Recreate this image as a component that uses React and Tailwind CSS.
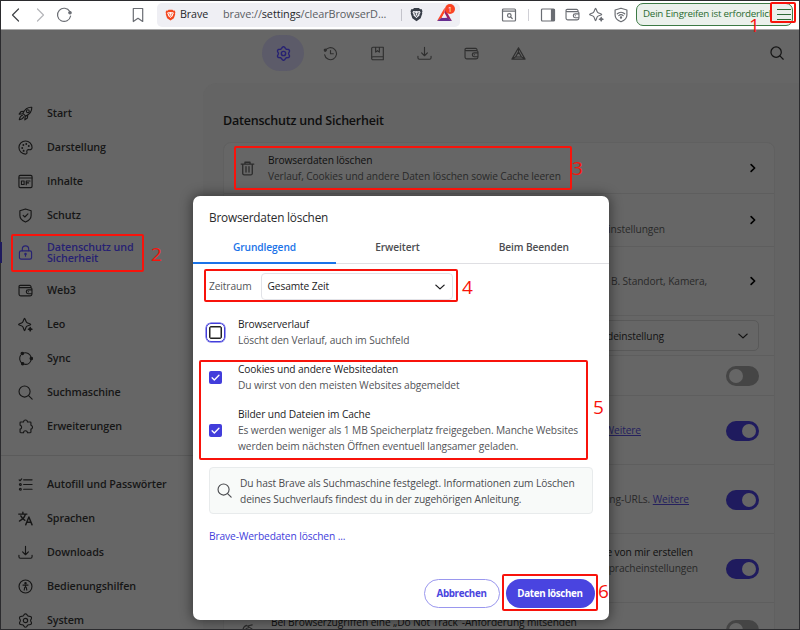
import React from "react";

const stroke = { fill: "none", stroke: "currentColor", strokeWidth: 1.2, strokeLinecap: "round", strokeLinejoin: "round" };

function Svg({ className = "size-4", children, box = 16, sw }) {
  return (
    <svg viewBox={`0 0 ${box} ${box}`} className={`shrink-0 ${className}`} {...stroke} strokeWidth={sw ?? 1.2}>
      {children}
    </svg>
  );
}

// Six-lobed outline of the settings gear.
const gearPoints = Array.from({ length: 72 }, (_, i) => {
  const a = (i * 5 * Math.PI) / 180;
  const r = 6.3 + 0.85 * Math.cos(6 * (a - Math.PI / 2));
  return `${(8 + r * Math.cos(a)).toFixed(2)},${(8 + r * Math.sin(a)).toFixed(2)}`;
}).join(" ");

const Gear = (p) => (
  <Svg {...p}>
    <polygon points={gearPoints} />
    <circle cx="8" cy="8" r="2.300" />
  </Svg>
);
const History = (p) => (
  <Svg {...p}>
    <path d="M2.200 5.500A6.400 6.400 0 1 1 1.700 9.300M8 4.800V8.300h3" />
    <circle cx="2.400" cy="4.300" r="1.100" fill="currentColor" />
  </Svg>
);
const Book = (p) => (
  <Svg {...p}>
    <path d="M1.800 13V2.500a1.200 1.200 0 0 1 1.200-1.200h11.200v13.400H3.300a1.500 1.500 0 0 1 0-3.200h10.900M6 1.500v5l2-1.500 2 1.500v-5" />
  </Svg>
);
const Download = (p) => (
  <Svg {...p}>
    <path d="M8 1.500v8.700M4.900 7.300 8 10.400l3.100-3.100M1 11v1.600a1.500 1.500 0 0 0 1.500 1.500h11a1.500 1.500 0 0 0 1.500-1.500V11" />
  </Svg>
);
const Wallet = (p) => (
  <Svg {...p}>
    <path d="M13.900 4.900v-.8a1.600 1.600 0 0 0-1.600-1.600H2.400A1.300 1.300 0 0 0 1.100 3.800v7.900a2 2 0 0 0 2 2h9.900a1.900 1.900 0 0 0 1.900-1.900V6.500a1.600 1.600 0 0 0-1.600-1.600H2.400a1.200 1.200 0 0 1-1.200-1.200M14.900 7.300h-4a2 2 0 0 0 0 4.100h4M10.900 9.300h.3" />
  </Svg>
);
const Triangles = (p) => (
  <Svg {...p}>
    <path d="M8 1.800 15 14H1ZM8 6.300 11.200 11.700H4.800ZM8 1.800v4.500M15 14l-3.800-2.300M1 14l3.800-2.300" />
  </Svg>
);
const Search = (p) => (
  <Svg {...p}>
    <circle cx="7" cy="7" r="5.900" />
    <path d="m11.300 11.300 3.800 3.800" />
  </Svg>
);
const Sparkle = (p) => (
  <Svg {...p}>
    <path d="M7 1.300c.7 0 1 3.200 2.200 4.400 1.200 1.200 4.400 1.500 4.400 2.200s-3.200.9-4.400 2.100C8 11.200 7.700 14.500 7 14.500s-1-3.300-2.200-4.500C3.600 8.800.6 8.600.6 7.900s3-1 4.200-2.200C6 4.500 6.300 1.300 7 1.300Z" />
    <path d="m13 10.900.6 1.500 1.500.6-1.500.6-.6 1.500-.6-1.500-1.500-.6 1.500-.6Z" fill="currentColor" />
  </Svg>
);
const Rocket = (p) => (
  <Svg {...p}>
    <path d="M14.700 1.300c-4.200-.3-7.200 1.700-9.500 6.500l3 3c4.800-2.300 6.700-5.300 6.500-9.500ZM6.300 5.600 3.200 6 1.200 8.700l4-.4M10.400 9.700 10 12.800l-2.700 2 .4-4M4.700 10c-1.900.3-2.600 1.600-3.300 4.600 3-.6 4.200-1.200 4.700-3" />
    <circle cx="10.500" cy="5.500" r="1.500" />
  </Svg>
);
const Palette = (p) => (
  <Svg {...p}>
    <path d="M15 8a7 7 0 1 0-7 7c1.300 0 1.800-.9 1.500-1.900-.5-1.800.5-3 2.200-2.800 2.100.3 3.300-.7 3.300-2.300Z" />
    <path d="M4.500 8.500v.1M5.700 5.300v.1M8.800 4.200v.1M11.500 6.300v.1M6 11.500v.1" strokeWidth="2" />
  </Svg>
);
const Content = (p) => (
  <Svg {...p}>
    <rect x="1" y="1.500" width="14" height="13" rx="1.400" />
    <path d="M1.200 4.300h13.600M8.800 7.500h4M8.800 9.500h2.500M8.800 7.500v4" />
    <rect x="3.700" y="7.500" width="2.800" height="3.700" />
  </Svg>
);
const Shield = (p) => (
  <Svg {...p}>
    <path d="M8 1 14 2.900v5.200c0 3.300-2.300 5.500-6 6.900-3.700-1.400-6-3.600-6-6.900V2.900Z" />
    <path d="m5.500 7.800 1.800 1.800 3.300-3.400" />
  </Svg>
);
const Lock = (p) => (
  <Svg {...p}>
    <rect x="1.500" y="6.200" width="13" height="8.800" rx="1.800" />
    <path d="M4.600 6V4.300a3.400 3.400 0 0 1 6.800 0V6M8 9.500v2.400" />
    <circle cx="8" cy="9.600" r=".7" fill="currentColor" />
  </Svg>
);
const Sync = (p) => (
  <Svg {...p}>
    <path d="M4.300 13A6.300 6.300 0 0 1 2.800 4.500M6 2.200a6.200 6.200 0 0 1 7.900 4.300M13.900 9.700A6.200 6.200 0 0 1 7 14.200" />
    <g fill="currentColor">
      <circle cx="4.600" cy="2.600" r="1.300" />
      <circle cx="14.200" cy="8" r="1.300" />
      <circle cx="5" cy="13.500" r="1.300" />
    </g>
  </Svg>
);
const Puzzle = (p) => (
  <Svg {...p}>
    <path d="M3 3.200h2.900a2.100 2.100 0 0 1 4.200 0H13a.8.8 0 0 1 .8.800v2.700a2.100 2.100 0 0 1 0 4.100v3a.8.8 0 0 1-.8.800h-2.900a2.100 2.100 0 0 0-4.200 0H3a.8.8 0 0 1-.8-.8v-3a2.100 2.100 0 0 0 0-4.100V4a.8.8 0 0 1 .8-.8Z" />
  </Svg>
);
const List = (p) => (
  <Svg {...p}>
    <path d="M6 3h9M6 8h9M6 13h9M1.200 3l1 1L4 2" />
    <circle cx="2.500" cy="8" r="1" />
    <circle cx="2.500" cy="13" r="1" />
  </Svg>
);
const Translate = (p) => (
  <Svg sw={1.500} {...p}>
    <path d="M.8 3.300h8.700M5.200 1.300v2M7.900 3.500C7 6.600 4.900 9 1.500 10.700M3 5.200c1 2 2.500 3.700 4.400 4.700M8.200 14.800l3.400-8.500L15 14.800M9.300 12h4.600" />
  </Svg>
);
const Access = (p) => (
  <Svg {...p}>
    <circle cx="8" cy="8" r="6.900" />
    <circle cx="8" cy="4.500" r=".7" fill="currentColor" />
    <path d="M5.300 6.500h5.400M8 6.500v2.300M6.600 11.800 7.200 8.800h1.600l.6 3" />
  </Svg>
);
const Trash = (p) => (
  <Svg sw={1.400} {...p}>
    <path d="M1.300 3.300h13.400M5.300 3.100V1.300h5.400v1.800M2.900 3.500v9.700a1.500 1.500 0 0 0 1.500 1.500h7.200a1.500 1.500 0 0 0 1.500-1.500V3.500M6.400 6v5.800M9.600 6v5.800" />
  </Svg>
);
const ChevronRight = ({ className }) => (
  <Svg className={className} sw={2.200}>
    <path d="m5.500 3.500 4.700 4.500-4.700 4.500" />
  </Svg>
);
const ChevronDown = ({ className }) => (
  <Svg className={className} sw={1.800}>
    <path d="m2.500 5.500 5.500 5 5.500-5" />
  </Svg>
);
const Lion = ({ className, fill, face }) => (
  <svg viewBox="0 0 16 18" className={`shrink-0 ${className}`}>
    <path d="M5 1h6l1.500 1.500 1.700-.2L15.400 5l-.6 1.500.3 1.200-2 6L8 17.400 2.900 13.700l-2-6 .3-1.200L.6 5l1.200-2.700 1.700.2Z" fill={fill} />
    <path d="M4 4.700 6.500 5 8 4.600 9.500 5l2.500-.3 1 1.800-1.600 3 .3 1-2 1.200L8 13.500l-1.700-1.800-2-1.200.3-1L3 6.500Z" fill={face} />
    <path d="M4.600 6.800 7 7.500l-.6 2L8 10.600l1.600-1.100-.6-2 2.400-.7M8 10.800v1" fill="none" stroke={fill} strokeWidth="1" />
  </svg>
);

const navTop = [
  ["Start", Rocket],
  ["Darstellung", Palette],
  ["Inhalte", Content],
  ["Schutz", Shield],
  ["Datenschutz und Sicherheit", Lock, true],
  ["Web3", Wallet],
  ["Leo", Sparkle],
  ["Sync", Sync],
  ["Suchmaschine", Search],
  ["Erweiterungen", Puzzle],
];
const navBottom = [
  ["Autofill und Passwörter", List],
  ["Sprachen", Translate],
  ["Downloads", Download],
  ["Bedienungshilfen", Access],
  ["System", Gear],
];

function NavItem({ label, Icon, active }) {
  return (
    <div className={`flex shrink-0 items-center gap-[14px] pl-[18px] ${active ? "h-[41px] text-[#262173]" : "h-[34px] text-[#161616]"}`}>
      <Icon className="size-[15px]" />
      <span className="w-[130px] pt-px text-[10.750px] leading-[11px] font-semibold tracking-[-0.1px]">
        {active ? <>Datenschutz und<br />Sicherheit</> : label}
      </span>
    </div>
  );
}

function Toggle({ on }) {
  return (
    <div className={`flex h-5 w-[33px] shrink-0 items-center rounded-full px-[3px] ${on ? "justify-end bg-[#1f1b5e]" : "bg-[#454545]"}`}>
      <div className="size-[14px] rounded-full bg-[#666]" />
    </div>
  );
}

function Row({ className, children }) {
  return <div className={`flex shrink-0 items-center border-b border-[#5e5e5e] pr-[15px] ${className}`}>{children}</div>;
}

function Checkbox({ checked }) {
  return checked ? (
    <div className="flex size-[13px] items-center justify-center rounded-[2px] bg-[#423ddb] text-white">
      <Svg className="size-[11px]" sw={2}><path d="m3 8.500 3.300 3L13 4.700" /></Svg>
    </div>
  ) : (
    <div className="flex size-[19px] items-center justify-center rounded-[5px] border-[1.500px] border-[#423ddb] shadow-[0_0_0_0.5px_#423ddb]">
      <div className="size-[13px] rounded-[2px] border-[1.500px] border-[#222] shadow-[inset_0_0_0_0.5px_#222]" />
    </div>
  );
}

function Option({ title, checked, children, className }) {
  return (
    <div className={`flex items-center ${className}`}>
      <div className="flex w-[45px] shrink-0 justify-center"><Checkbox checked={checked} /></div>
      <div className="whitespace-nowrap text-[10.200px] leading-4 tracking-[-0.1px]">
        <div className="text-[#1c1c1e]">{title}</div>
        <div className="text-[#535458]">{children}</div>
      </div>
    </div>
  );
}

function Mark({ box, num, label }) {
  return (
    <>
      <div className={`absolute rounded-[2px] border-2 border-[#f8130b] ${box}`} />
      <div className={`absolute text-[19px] leading-5 text-[#f8130b] ${num}`}>{label}</div>
    </>
  );
}

export default function App() {
  return (
    <div className="relative flex h-[630px] w-[800px] flex-col overflow-hidden bg-[#666] font-['Open_Sans','Noto_Sans',sans-serif] text-[10.200px] tracking-[-0.1px] text-[#1a1a1a]">
      <header className="flex h-[30px] shrink-0 items-center border-b border-[#aaa] bg-white text-[#6a6d73]">
        <div className="flex w-[157px] items-center pl-2">
          <Svg className="size-4 text-[#3f4246]"><path d="M10.500 2 4.500 8l6 6" /></Svg>
          <Svg className="ml-2 size-4 text-[#b5b6ba]"><path d="m5.500 2 6 6-6 6" /></Svg>
          <Svg className="ml-2 size-4"><path d="M13.800 4.500A6.600 6.600 0 1 0 14.600 9" /><circle cx="14" cy="5.800" r="1.200" fill="currentColor" /></Svg>
          <Svg className="ml-[58px] size-4"><path d="M3.300 1.500h9.400v13L8 11.300l-4.700 3.200Z" /></Svg>
        </div>
        <div className="flex h-[24px] w-[303px] items-center rounded-[5px] bg-[#efeff4]">
          <Lion className="ml-[8px] h-[12px] w-[11px]" fill="#f4471f" face="#fff" />
          <span className="ml-[4px] w-[43px] text-[10.700px] text-[#26272b]">Brave</span>
          <span className="w-[178px] text-[10.900px] text-[#5a5d63]">brave://<span className="text-[#26272b]">settings</span>/clearBrowserD...</span>
          <span className="h-3 w-px bg-[#c3c3cb]" />
          <Lion className="ml-[8px] h-[15px] w-[13px]" fill="#383e48" face="#efeff4" />
          <div className="relative ml-[14px]">
            <svg viewBox="0 0 16 14" className="h-[13px] w-[15px]">
              <path d="M8 0 16 14 8 9.500Z" fill="#9e1f63" />
              <path d="M8 0 0 14 5 10.800 8 5Z" fill="#ff4724" />
              <path d="M0 14h16l-5-3.500H5Z" fill="#662d91" />
              <path d="M8 5.200 11 10.500H5Z" fill="#efeff4" />
            </svg>
            <span className="absolute -top-[4px] left-[8px] flex size-[10px] items-center justify-center rounded-full bg-[#fb4324] text-[7px] leading-none text-white">1</span>
          </div>
        </div>
        <Svg className="ml-[41px] size-4"><rect x="1.500" y="2" width="13" height="12" rx="1" /><path d="M1.500 4.200h13M9.700 10l1.500 1.500" /><circle cx="8.300" cy="8.500" r="1.800" /></Svg>
        <span className="ml-[11px] h-3 w-px bg-[#d0d0d6]" />
        <Svg className="ml-[11px] size-4"><rect x="1.500" y="2" width="13" height="12" rx="1" /><path d="M11.500 2.500h2.700v11h-2.700Z" fill="currentColor" /></Svg>
        <Wallet className="ml-[9px] size-[15px]" />
        <Sparkle className="ml-[9px] size-[15px]" />
        <Svg className="ml-[9px] size-4"><path d="M8 1.200 13.900 3v5c0 3.200-2.200 5.400-5.900 6.800C4.300 13.400 2.100 11.200 2.100 8V3ZM4.300 6.800a5.500 5.500 0 0 1 7.400 0M5.800 8.600a3.200 3.200 0 0 1 4.400 0" /><circle cx="8" cy="10.500" r=".6" fill="currentColor" /></Svg>
        <div className="ml-[7px] flex h-[23px] w-[157px] items-center rounded-[7px] border border-[#3c7a45] bg-[#ebf1ec] pl-[6px] text-[9.800px] tracking-[-0.240px] whitespace-nowrap text-[#2a6b30]">
          <span className="w-[128.500px] overflow-hidden text-clip">Dein Eingreifen ist erforderlich</span>
          <div className="flex flex-col gap-[4px] pl-[5px]">
            <span className="h-px w-[14px] bg-[#2f6b36]" />
            <span className="h-px w-[14px] bg-[#2f6b36]" />
            <span className="h-px w-[14px] bg-[#2f6b36]" />
          </div>
        </div>
      </header>

      <div className="flex h-[53px] shrink-0 items-center pb-[7px] text-[#2f2f2f]">
        <div className="ml-[262px] flex h-[36px] w-[42px] items-center justify-center rounded-full bg-[#5c5b69] text-[#262173]"><Gear className="size-[15px]" sw={1.500} /></div>
        <div className="ml-[18.500px] flex gap-8">
          <History className="size-[15px]" />
          <Book className="size-[15px]" />
          <Download className="size-[15px]" />
          <Wallet className="size-[15px]" />
          <Triangles className="size-[15px]" />
        </div>
        <Search className="ml-[244.500px] size-[14px] text-[#151515]" sw={1.400} />
      </div>

      <div className="flex h-[547px] shrink-0 overflow-hidden">
        <nav className="flex w-[203px] shrink-0 flex-col pt-[13px]">
          {navTop.map(([label, Icon, active]) => <NavItem key={label} label={label} Icon={Icon} active={active} />)}
          <div className="mt-3 mb-[11px] h-px shrink-0 bg-[#5b5b5b]" />
          {navBottom.map(([label, Icon]) => <NavItem key={label} label={label} Icon={Icon} />)}
        </nav>

        <main className="flex w-[597px] shrink-0 flex-col rounded-tl-[14px] bg-[#646464] pl-[20px]">
          <h1 className="flex h-[59px] shrink-0 items-center pt-[18px] text-[12.500px] font-semibold tracking-[-0.220px] text-[#0e0e0e]">Datenschutz und Sicherheit</h1>
          <section className="flex w-[552px] shrink-0 flex-col rounded-t-[8px] border border-[#606060] bg-[#666] leading-4 whitespace-nowrap">
            <Row className="h-[51px] pl-[16px]">
              <Trash className="size-[15px] text-[#2c2c2c]" />
              <div className="ml-[13px] flex-1">
                <div className="text-[#0f0f0f]">Browserdaten löschen</div>
                <div className="text-[#292929]">Verlauf, Cookies und andere Daten löschen sowie Cache leeren</div>
              </div>
              <ChevronRight className="size-3 text-black" />
            </Row>
            <Row className="h-[53px]">
              <div className="w-[441px] pt-[17px] text-right text-[#292929]">Einstellungen</div>
              <ChevronRight className="ml-auto size-3 text-black" />
            </Row>
            <Row className="h-[69px]">
              <div className="w-[483px] text-right text-[#292929]">z. B. Standort, Kamera,</div>
              <ChevronRight className="ml-auto size-3 text-black" />
            </Row>
            <Row className="h-[40px]">
              <div className="ml-auto flex h-[31px] w-[200px] items-center justify-end rounded-[5px] border border-[#595959] pr-[9px] text-[#121212]">
                <span className="mr-[73px]">Standardeinstellung</span>
                <ChevronDown className="size-3" />
              </div>
            </Row>
            <Row className="h-[40px] justify-end pt-px"><Toggle /></Row>
            <Row className="h-[69px] pt-px">
              <div className="w-[417px] pb-[2px] text-right text-[#25215e] underline">Weitere</div>
              <div className="ml-auto"><Toggle on /></div>
            </Row>
            <Row className="h-[69px] pt-px">
              <div className="w-[465px] pb-[2px] text-right text-[#292929]">Tracking-URLs. <span className="text-[#25215e] underline">Weitere</span></div>
              <div className="ml-auto"><Toggle on /></div>
            </Row>
            <Row className="h-[69px] pt-[2px]">
              <div className="w-[474px] pb-[18px] text-right">
                <div className="pr-[5px] text-[#0f0f0f]">die von mir erstellen</div>
                <div className="text-[#292929]">Spracheinstellungen</div>
              </div>
              <div className="ml-auto"><Toggle on /></div>
            </Row>
            <Row className="h-[55px] pl-[16px]">
              <Svg className="size-[15px] text-[#2c2c2c]"><path d="M3 8.500c0-3 1-5 4-6l6 4M5 8c1-2 2-3 4-3M9 3l4-1" /></Svg>
              <div className="ml-[16px] flex-1 pb-[17px] text-[#0f0f0f]">Bei Browserzugriffen eine „Do Not Track"-Anforderung mitsenden</div>
              <Toggle />
            </Row>
          </section>
        </main>
      </div>

      <div className="absolute top-[196px] left-[193px] flex h-[424px] w-[415.500px] flex-col rounded-[7px] bg-white shadow-[0_0_12px_2px_rgba(0,0,0,0.4)]">
        <h2 className="flex h-[44px] items-center pl-[16px] text-[11.800px] tracking-[-0.2px] text-[#2a2a2c]">Browserdaten löschen</h2>
        <div className="flex h-[24px] border-b border-[#dfdfe3] text-center text-[10.200px] leading-[15px] font-semibold tracking-[-0.1px] text-[#4c4d51]">
          <div className="h-[24px] w-[143px] border-b-2 border-[#1a73e8] text-[#1a73e8]">Grundlegend</div>
          <div className="w-[123px]">Erweitert</div>
          <div className="flex-1">Beim Beenden</div>
        </div>
        <div className="mt-[8px] ml-[16px] flex h-[29px] items-center">
          <span className="w-[51.500px] text-[#535458]">Zeitraum</span>
          <div className="flex h-[27px] w-[192px] items-center justify-between rounded-[4px] border border-[#e2e3e8] pr-[6px] pl-[6px] text-[#1c1c1e]">
            <span>Gesamte Zeit</span>
            <ChevronDown className="size-3" />
          </div>
        </div>
        <Option className="mt-[15px]" title="Browserverlauf">Löscht den Verlauf, auch im Suchfeld</Option>
        <Option className="mt-[13px]" title="Cookies und andere Websitedaten" checked>Du wirst von den meisten Websites abgemeldet</Option>
        <Option className="mt-[13px]" title="Bilder und Dateien im Cache" checked>
          Es werden weniger als 1 MB Speicherplatz freigegeben. Manche Websites<br />
          werden beim nächsten Öffnen eventuell langsamer geladen.
        </Option>
        <div className="mx-[16px] mt-[13px] flex h-[47px] items-center rounded-[4px] border border-[#e8ebec] bg-[#f8faf9] pl-[7px] leading-4 whitespace-nowrap text-[#4a4b4f]">
          <Search className="size-[15px]" />
          <p className="ml-[8px]">
            Du hast Brave als Suchmaschine festgelegt. Informationen zum Löschen<br />
            deines Suchverlaufs findest du in der zugehörigen Anleitung.
          </p>
        </div>
        <div className="mt-[14px] ml-[16px] leading-4 text-[#423ddb]">Brave-Werbedaten löschen ...</div>
        <div className="mt-auto mr-[14px] mb-[12.500px] flex justify-end gap-[6px] text-[9.800px] font-bold tracking-[-0.350px]">
          <div className="flex h-[29px] w-[76px] items-center justify-center rounded-full border border-[#9a97ee] pt-[2px] text-[#4a45de]">Abbrechen</div>
          <div className="flex h-[29px] w-[89px] items-center justify-center rounded-full bg-[#4944e0] pt-[2px] text-white">Daten löschen</div>
        </div>
      </div>

      <Mark box="top-[2px] left-[770px] h-[21px] w-[26px]" num="top-[15px] left-[749px]" label="1" />
      <Mark box="top-[234px] left-[11px] h-[38px] w-[133px]" num="top-[244px] left-[151px]" label="2" />
      <Mark box="top-[146px] left-[234px] h-[44px] w-[338px]" num="top-[158px] left-[572px]" label="3" />
      <Mark box="top-[269px] left-[204px] h-[33px] w-[254px]" num="top-[277px] left-[462px]" label="4" />
      <Mark box="top-[360px] left-[199px] h-[100px] w-[389px]" num="top-[397px] left-[593px]" label="5" />
      <Mark box="top-[574px] left-[502px] h-[37px] w-[96px]" num="top-[581px] left-[598px]" label="6" />
      <div className="pointer-events-none absolute inset-0 border border-[#2b2b2e]" />
      <div className="absolute top-[242px] left-0 h-[21px] w-[2px] bg-[#1f1b5e]" />
    </div>
  );
}
